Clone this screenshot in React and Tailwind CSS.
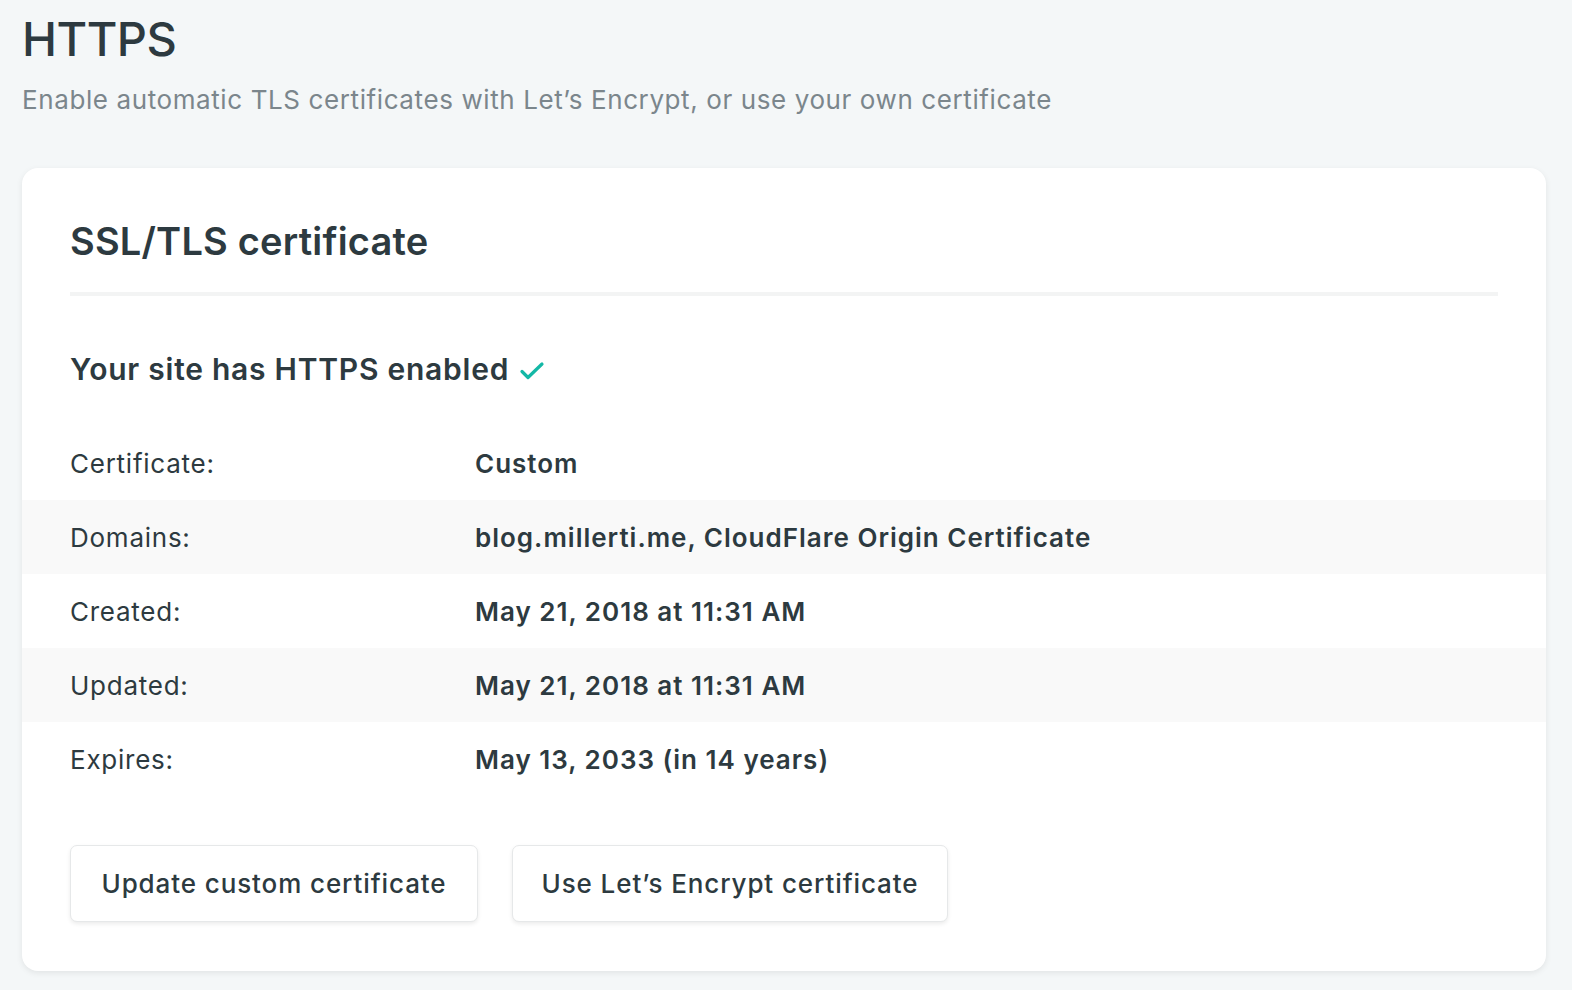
import React from "react";

const rows = [
  { label: "Certificate:", value: "Custom" },
  { label: "Domains:", value: "blog.millerti.me, CloudFlare Origin Certificate" },
  { label: "Created:", value: "May 21, 2018 at 11:31 AM" },
  { label: "Updated:", value: "May 21, 2018 at 11:31 AM" },
  { label: "Expires:", value: "May 13, 2033 (in 14 years)" },
];

const CheckIcon = () => (
  <svg width="26" height="22" viewBox="0 0 26 22" fill="none" className="ml-[10px] mt-1">
    <path d="M3 11.5l6 6L23 4" stroke="#14b8a6" strokeWidth="3.2" strokeLinecap="round" strokeLinejoin="round" />
  </svg>
);

const App = () => {
  return (
    <div
      className="min-h-[990px] bg-[#f4f7f8] px-[22px] pt-[8px] text-[#2d3a40]"
      style={{ fontFamily: "Inter, 'Noto Sans', sans-serif" }}
    >
      {/* Header */}
      <h1 className="text-[47px] leading-[62px] font-medium tracking-[-0.5px]">HTTPS</h1>
      <p className="mt-[13px] text-[26px] leading-[34px] tracking-[0.6px] text-[#7b868c]">
        Enable automatic TLS certificates with Let’s Encrypt, or use your own certificate
      </p>

      {/* Card */}
      <div className="mt-[51px] w-[1524px] rounded-[16px] bg-white px-[48px] pt-[50px] pb-[49px] shadow-[0_2px_6px_rgba(0,0,0,0.08)]">
        <h2 className="text-[38px] leading-[46px] font-semibold tracking-[0.2px]">SSL/TLS certificate</h2>
        <div className="mt-[28px] h-[4px] bg-[#f3f4f4]"></div>

        <div className="mt-[53px] flex items-center">
          <h3 className="text-[30px] leading-[40px] font-semibold tracking-[0.75px]">Your site has HTTPS enabled</h3>
          <CheckIcon />
        </div>

        <div className="mt-[37px] -mx-[48px]">
          {rows.map((row, i) => (
            <div
              key={i}
              className={`flex h-[74px] items-center px-[48px] text-[26px] ${
                i % 2 === 1 ? "bg-[#f9f9f9]" : "bg-white"
              }`}
            >
              <span className="w-[405px] tracking-[0.75px]">{row.label}</span>
              <span className="font-semibold tracking-[1px]">{row.value}</span>
            </div>
          ))}
        </div>

        {/* buttons */}
        <div className="mt-[49px] flex gap-[34px]">
          <button className="h-[77px] w-[408px] rounded-[7px] border border-[#e6e8e9] bg-white text-[26px] font-medium tracking-[0.9px] shadow-[0_2px_4px_rgba(0,0,0,0.08)]">
            Update custom certificate
          </button>
          <button className="h-[77px] w-[436px] rounded-[7px] border border-[#e6e8e9] bg-white text-[26px] font-medium tracking-[0.9px] shadow-[0_2px_4px_rgba(0,0,0,0.08)]">
            Use Let’s Encrypt certificate
          </button>
        </div>
      </div>
    </div>
  );
};

export default App;
